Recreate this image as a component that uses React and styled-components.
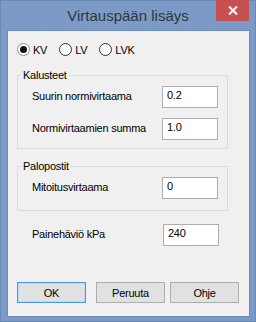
import React from "react";
import styled, { createGlobalStyle } from "styled-components";

const Global = createGlobalStyle`
  html, body { margin: 0; padding: 0; background: #ffffff; }
  body { font-family: "Liberation Sans", Arial, sans-serif; }
`;

const Window = styled.div`
  width: 256px;
  height: 322px;
  box-sizing: border-box;
  background: #7b9bc6;
  border: 1px solid #6a89b3;
  display: flex;
  flex-direction: column;
`;

const TitleBar = styled.div`
  height: 29px;
  position: relative;
  display: flex;
  align-items: center;
  justify-content: center;
`;

const Title = styled.div`
  font-size: 15px;
  color: #2f3640;
  margin-top: -1px;
`;

const CloseButton = styled.div`
  position: absolute;
  top: -1px;
  right: 6px;
  width: 33px;
  height: 21px;
  background: #c75050;
  display: flex;
  align-items: center;
  justify-content: center;
`;

const Client = styled.div`
  margin-left: 6px;
  width: 243px;
  height: 287px;
  box-sizing: border-box;
  border: 1px solid #6d8bb4;
  background: #f0f0f0;
  display: flex;
  flex-direction: column;
  font-size: 11px;
  letter-spacing: -0.25px;
  color: #000;
`;

const RadioRow = styled.div`
  display: flex;
  align-items: center;
  gap: 12px;
  margin-top: 12px;
  padding-left: 9px;
  height: 13px;
`;

const RadioItem = styled.label`
  display: flex;
  align-items: center;
  gap: 3px;
`;

const RadioCircle = styled.span`
  width: 13px;
  height: 13px;
  box-sizing: border-box;
  border-radius: 50%;
  border: 1px solid ${(p) => (p.$checked ? "#8a8a8a" : "#333")};
  background: #fff;
  display: flex;
  align-items: center;
  justify-content: center;
  &::after {
    content: "";
    display: ${(p) => (p.$checked ? "block" : "none")};
    width: 7px;
    height: 7px;
    border-radius: 50%;
    background: #111;
  }
`;

const Group = styled.div`
  position: relative;
  margin-left: 9px;
  margin-top: ${(p) => p.$mt}px;
  width: 211px;
  height: ${(p) => p.$h}px;
  box-sizing: border-box;
  border: 1px solid #dcdcdc;
  padding-top: 10px;
  display: flex;
  flex-direction: column;
  gap: 10px;
`;

const Legend = styled.span`
  position: absolute;
  top: -8px;
  left: 3px;
  padding: 0 2px;
  background: #f0f0f0;
  line-height: 14px;
`;

const Row = styled.div`
  display: flex;
  align-items: center;
  justify-content: space-between;
  padding-left: ${(p) => p.$pl}px;
  padding-right: 9px;
`;

const Label = styled.span`
  margin-bottom: 3px;
`;

const Field = styled.div`
  width: 56px;
  height: 22px;
  box-sizing: border-box;
  border: 1px solid #adadad;
  background: #fff;
  padding: 2px 0 0 4px;
  line-height: 13px;
`;

const PlainRow = styled(Row)`
  margin-left: 9px;
  margin-top: 13px;
  width: 211px;
  box-sizing: border-box;
`;

const ButtonRow = styled.div`
  display: flex;
  margin-top: 36px;
  padding-left: 9px;
  gap: 5px;
`;

const Button = styled.div`
  width: 69px;
  height: 21px;
  box-sizing: border-box;
  margin-right: ${(p) => p.$mr || 0}px;
  border: 1px solid ${(p) => (p.$default ? "#4a9ae6" : "#adadad")};
  box-shadow: ${(p) => (p.$default ? "inset 0 0 0 1px #bcdaf6" : "none")};
  background: #e1e1e1;
  display: flex;
  align-items: center;
  justify-content: center;
`;

function Radio({ checked, label }) {
  return (
    <RadioItem>
      <RadioCircle $checked={checked} />
      <span>{label}</span>
    </RadioItem>
  );
}

function FieldRow({ label, value, pl = 14 }) {
  return (
    <Row $pl={pl}>
      <Label>{label}</Label>
      <Field>{value}</Field>
    </Row>
  );
}

export default function App() {
  return (
    <>
      <Global />
      <Window>
        <TitleBar>
          <Title>Virtauspään lisäys</Title>
          <CloseButton>
            <svg width="10" height="9" viewBox="0 0 10 9">
              <path d="M1 0.5 L9 8.5 M9 0.5 L1 8.5" stroke="#fff" strokeWidth="2" />
            </svg>
          </CloseButton>
        </TitleBar>
        <Client>
          <RadioRow>
            <Radio checked label="KV" />
            <Radio label="LV" />
            <Radio label="LVK" />
          </RadioRow>
          <Group $mt={19} $h={74}>
            <Legend>Kalusteet</Legend>
            <FieldRow label="Suurin normivirtaama" value="0.2" />
            <FieldRow label="Normivirtaamien summa" value="1.0" />
          </Group>
          <Group $mt={17} $h={45}>
            <Legend>Palopostit</Legend>
            <FieldRow label="Mitoitusvirtaama" value="0" />
          </Group>
          <PlainRow $pl={15}>
            <Label>Painehäviö kPa</Label>
            <Field>240</Field>
          </PlainRow>
          <ButtonRow>
            <Button $default $mr={5}>OK</Button>
            <Button>Peruuta</Button>
            <Button>Ohje</Button>
          </ButtonRow>
        </Client>
      </Window>
    </>
  );
}
